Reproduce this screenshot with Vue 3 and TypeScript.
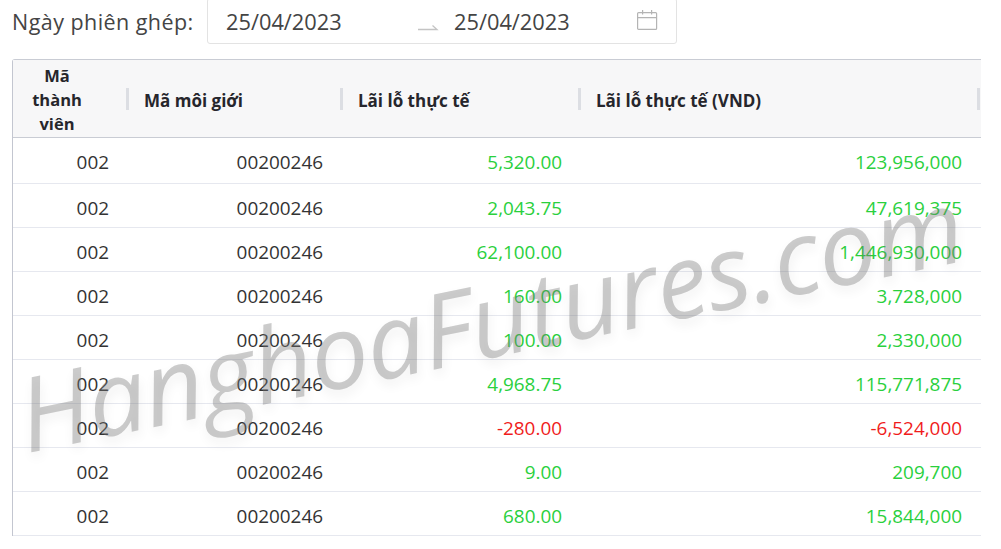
<script setup lang="ts">
interface Row { pl: string; vnd: string; neg?: boolean }
const rows: Row[] = [
  { pl: '5,320.00', vnd: '123,956,000' },
  { pl: '2,043.75', vnd: '47,619,375' },
  { pl: '62,100.00', vnd: '1,446,930,000' },
  { pl: '160.00', vnd: '3,728,000' },
  { pl: '100.00', vnd: '2,330,000' },
  { pl: '4,968.75', vnd: '115,771,875' },
  { pl: '-280.00', vnd: '-6,524,000', neg: true },
  { pl: '9.00', vnd: '209,700' },
  { pl: '680.00', vnd: '15,844,000' },
]
</script>

<template>
  <div class="page">
    <div class="filter">
      <span class="label">Ngày phiên ghép:</span>
      <div class="range">
        <span class="date">25/04/2023</span>
        <svg class="arrow" width="22" height="8" viewBox="0 0 22 8"><path d="M1 6.5H20L15.5 2.5" fill="none" stroke="#c4c4c4" stroke-width="1.3" /></svg>
        <span class="date">25/04/2023</span>
        <svg class="cal" width="22" height="22" viewBox="0 0 22 22" fill="none" stroke="#b4b4b4" stroke-width="1.2">
          <rect x="1.6" y="3.6" width="19" height="16.8" rx="1" />
          <path d="M1.6 8.6H20.6M6.6 1V5.6M15.6 1V5.6" />
        </svg>
      </div>
    </div>
    <div class="table">
      <div class="row head">
        <div class="th c1"><span class="first">Mã thành viên</span></div>
        <div class="th"><i class="bar"></i>Mã môi giới</div>
        <div class="th"><i class="bar"></i>Lãi lỗ thực tế</div>
        <div class="th"><i class="bar"></i>Lãi lỗ thực tế (VND)</div>
        <div class="th tail"><i class="bar"></i></div>
      </div>
      <div v-for="(r, i) in rows" :key="i" class="row body" :class="{ top: i === 0 }">
        <div class="td">002</div>
        <div class="td">00200246</div>
        <div class="td" :class="r.neg ? 'neg' : 'pos'">{{ r.pl }}</div>
        <div class="td" :class="r.neg ? 'neg' : 'pos'">{{ r.vnd }}</div>
        <div class="td"></div>
      </div>
    </div>
    <div class="mark">HanghoaFutures.com</div>
  </div>
</template>

<style>
html, body { margin: 0; background: #fff; overflow: hidden; }
</style>

<style scoped>
.page {
  position: relative;
  width: 1001px;
  height: 549px;
  overflow: hidden;
  background: #fff;
  font-family: "Open Sans", "Noto Sans", sans-serif;
  color: #333;
}
.filter {
  display: flex;
  align-items: center;
  gap: 12px;
  height: 45px;
  padding-left: 12px;
  margin-top: -1px;
}
.label {
  width: 183px;
  flex: none;
  font-size: 21.5px;
  letter-spacing: 0.45px;
  color: #444;
  white-space: nowrap;
}
.range {
  box-sizing: border-box;
  width: 470px;
  height: 46px;
  margin-top: -1px;
  display: flex;
  align-items: center;
  padding: 0 18px 0 18px;
  border: 1px solid #e3e3e3;
  border-radius: 3px;
}
.date { font-size: 21.8px; color: #444; white-space: nowrap; width: 117px; }
.arrow { margin: 12px 15px 0 74px; flex: none; }
.cal { margin-left: auto; margin-top: -3px; flex: none; }
.table {
  box-sizing: border-box;
  margin: 15px 0 0 12px;
  width: 969px;
  border-top: 1px solid #c9ccd4;
  border-left: 1px solid #c3c6d0;
  border-radius: 3px 0 0 0;
}
.row {
  display: grid;
  grid-template-columns: 113px 214px 238px 399px 4px;
}
.head {
  height: 77px;
  background: #f7f7f8;
  border-bottom: 1px solid #c9ccd4;
  font-size: 17px;
  font-weight: 700;
  color: #26262c;
}
.th {
  position: relative;
  display: flex;
  align-items: center;
  padding: 3px 0 0 18px;
  box-sizing: border-box;
  white-space: nowrap;
}
.th.c1 { padding: 2px 0 0; }
.first {
  display: block;
  box-sizing: border-box;
  width: 88px;
  padding: 0 12px;
  text-align: center;
  white-space: normal;
  line-height: 24px;
  font-size: 16.5px;
}
.bar {
  position: absolute;
  left: 0;
  top: 28px;
  width: 3px;
  height: 22px;
  background: #dcdee3;
}
.tail { padding: 0; }
.body {
  height: 44px;
  border-bottom: 1px solid #e6e8ef;
  box-sizing: border-box;
}
.body.top { height: 46px; }
.td {
  display: flex;
  align-items: center;
  justify-content: flex-end;
  box-sizing: border-box;
  padding: 5px 16px 0 0;
  font-size: 18.9px;
  color: #333;
}
.body.top .td { padding-top: 3px; }
.td:first-child { padding-right: 17px; }
.td:nth-child(2) { padding-right: 17px; }
.td:nth-child(4) { padding-right: 15px; }
.row .td:last-child { padding: 0; }
.pos { color: #2ad03d; }
.neg { color: #f01c1c; }
.mark {
  position: absolute;
  left: 19px;
  top: 363px;
  font-size: 103px;
  font-style: italic;
  white-space: nowrap;
  color: rgba(120, 120, 120, 0.38);
  letter-spacing: -0.8px;
  line-height: 1;
  transform: rotate(-11.6deg);
  transform-origin: left center;
  text-shadow: 0 6px 12px rgba(0, 0, 0, 0.06);
  pointer-events: none;
}
</style>
